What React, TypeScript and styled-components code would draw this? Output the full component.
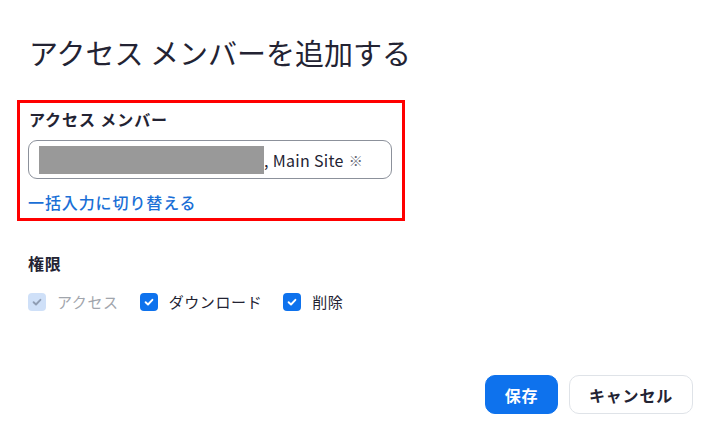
import styled, { createGlobalStyle } from "styled-components";

const GlobalStyle = createGlobalStyle`
    html, body {
        margin: 0;
        padding: 0;
        background: #ffffff;
    }
    body {
        font-family: "Noto Sans CJK JP", "Noto Sans", sans-serif;
        color: #232333;
    }
`;

const Page = styled.div`
    width: 706px;
    height: 443px;
    box-sizing: border-box;
    padding: 32px 13px 0 28px;
    display: flex;
    flex-direction: column;
`;

const Title = styled.h1`
    margin: 0;
    font-size: 29px;
    line-height: 40px;
    font-weight: 400;
    color: #232333;
    padding-left: 1px;
`;

const Highlight = styled.section`
    margin: 28px 0 0 -11px;
    width: 388px;
    box-sizing: border-box;
    border: 3px solid #ff0000;
    padding: 5px 10px 5px 8px;
    display: flex;
    flex-direction: column;
`;

const FieldLabel = styled.div`
    font-size: 16px;
    line-height: 22px;
    font-weight: 700;
    letter-spacing: 0.9px;
    color: #232333;
    padding-left: 1px;
`;

const MemberInput = styled.div`
    margin-top: 10px;
    height: 39px;
    box-sizing: border-box;
    border: 1px solid #8c919b;
    border-radius: 9px;
    display: flex;
    align-items: center;
    padding: 0 10px;
`;

const Redacted = styled.span`
    width: 225px;
    height: 28px;
    background: #999999;
`;

const MemberText = styled.span`
    font-size: 16px;
    letter-spacing: 0.3px;
    color: #232333;
    white-space: nowrap;
`;

const Mark = styled.span`
    margin-left: 5px;
    font-size: 14px;
    color: #5f6670;
`;

const SwitchLink = styled.a`
    margin-top: 12px;
    font-size: 16px;
    line-height: 22px;
    font-weight: 500;
    letter-spacing: 0.9px;
    color: #1a6fd6;
    text-decoration: none;
    cursor: pointer;
`;

const SectionTitle = styled.div`
    margin-top: 31px;
    font-size: 16px;
    line-height: 22px;
    font-weight: 700;
    letter-spacing: 0.8px;
    color: #232333;
`;

const CheckRow = styled.div`
    margin-top: 17px;
    display: flex;
    align-items: center;
    gap: 21px;
`;

const CheckItem = styled.label<{ disabled?: boolean }>`
    display: flex;
    align-items: center;
    gap: 11px;
    font-size: 15px;
    line-height: 22px;
    letter-spacing: 0.6px;
    color: ${(p) => (p.disabled ? "#a1a5ac" : "#232333")};
`;

const Box = styled.span<{ disabled?: boolean }>`
    width: 18px;
    height: 18px;
    border-radius: 4px;
    background: ${(p) => (p.disabled ? "#cfe0f8" : "#0e72ed")};
    display: flex;
    align-items: center;
    justify-content: center;
`;

const Actions = styled.div`
    margin-top: 62px;
    display: flex;
    justify-content: flex-end;
    gap: 11px;
`;

const Button = styled.button<{ primary?: boolean }>`
    height: 39px;
    box-sizing: border-box;
    border-radius: 10px;
    font-family: inherit;
    font-size: 16px;
    font-weight: 700;
    letter-spacing: 0.8px;
    padding: 0;
    width: ${(p) => (p.primary ? "73px" : "124px")};
    background: ${(p) => (p.primary ? "#0e72ed" : "#ffffff")};
    color: ${(p) => (p.primary ? "#ffffff" : "#232333")};
    border: 1px solid ${(p) => (p.primary ? "#0e72ed" : "#dfe3e8")};
`;

function Check({ disabled }: { disabled?: boolean }) {
    return (
        <Box disabled={disabled}>
            <svg width="12" height="12" viewBox="0 0 12 12">
                <path
                    d="M2.6 6.2 L5 8.5 L9.4 3.8"
                    fill="none"
                    stroke={disabled ? "#8f9db3" : "#ffffff"}
                    strokeWidth="1.9"
                    strokeLinecap="round"
                    strokeLinejoin="round"
                />
            </svg>
        </Box>
    );
}

export default function App() {
    const perms = [
        { name: "アクセス", disabled: true },
        { name: "ダウンロード", disabled: false },
        { name: "削除", disabled: false },
    ];

    return (
        <>
            <GlobalStyle />
            <Page>
                <Title>アクセス メンバーを追加する</Title>
                <Highlight>
                    <FieldLabel>アクセス メンバー</FieldLabel>
                    <MemberInput>
                        <Redacted />
                        <MemberText>, Main Site</MemberText>
                        <Mark>※</Mark>
                    </MemberInput>
                    <SwitchLink>一括入力に切り替える</SwitchLink>
                </Highlight>
                <SectionTitle>権限</SectionTitle>
                <CheckRow>
                    {perms.map((p) => (
                        <CheckItem key={p.name} disabled={p.disabled}>
                            <Check disabled={p.disabled} />
                            {p.name}
                        </CheckItem>
                    ))}
                </CheckRow>
                <Actions>
                    <Button primary>保存</Button>
                    <Button>キャンセル</Button>
                </Actions>
            </Page>
        </>
    );
}
